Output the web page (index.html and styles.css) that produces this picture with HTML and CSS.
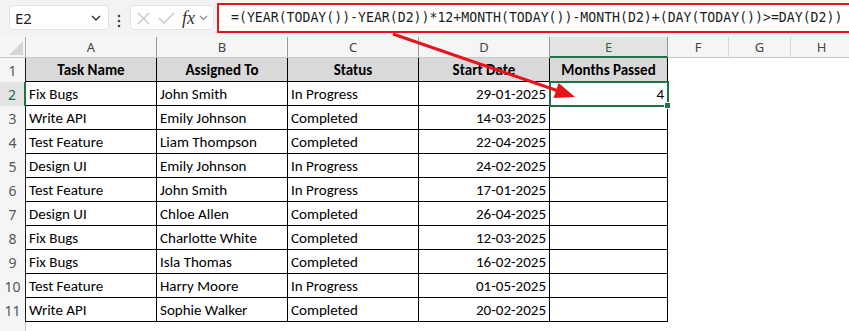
FILE: index.html
```html
<!DOCTYPE html>
<html>
<head>
<meta charset="utf-8">
<link rel="stylesheet" href="styles.css">
</head>
<body>
<div class="app">
  <div class="toolbar">
    <div class="namebox">
      <span class="nb-text">E2</span>
      <svg class="nb-chev" width="10" height="6" viewBox="0 0 10 6"><polyline points="1,1 5,5 9,1" fill="none" stroke="#333" stroke-width="1.4"/></svg>
    </div>
    <svg class="dots" width="4" height="14" viewBox="0 0 4 14"><circle cx="2" cy="2" r="1.3" fill="#444"/><circle cx="2" cy="7" r="1.3" fill="#444"/><circle cx="2" cy="12" r="1.3" fill="#444"/></svg>
    <div class="fxbox">
      <svg class="ic-x" width="13" height="13" viewBox="0 0 13 13"><path d="M1 1L12 12M12 1L1 12" stroke="#c4c4c4" stroke-width="1.3" fill="none"/></svg>
      <svg class="ic-ok" width="17" height="12" viewBox="0 0 17 12"><path d="M1 6L6 11L16 1" stroke="#c4c4c4" stroke-width="1.3" fill="none"/></svg>
      <span class="fx">fx</span>
      <svg class="fx-chev" width="9" height="6" viewBox="0 0 9 6"><polyline points="1,1 4.5,4.5 8,1" fill="none" stroke="#888" stroke-width="1.2"/></svg>
    </div>
    <div class="formula">=(YEAR(TODAY())-YEAR(D2))*12+MONTH(TODAY())-MONTH(D2)+(DAY(TODAY())&gt;=DAY(D2))</div>
  </div>

  <div class="grid">
    <div class="corner"><svg width="14" height="14" viewBox="0 0 14 14"><polygon points="14,0 14,14 0,14" fill="#d6d6d6"/></svg></div>
    <div class="ch dk">A</div><div class="ch dk">B</div><div class="ch dk">C</div><div class="ch dk">D</div><div class="ch dk sel">E</div><div class="ch">F</div><div class="ch">G</div><div class="ch">H</div>

    <div class="rh">1</div>
    <div class="c hd">Task Name</div><div class="c hd">Assigned To</div><div class="c hd">Status</div><div class="c hd">Start Date</div><div class="c hd">Months Passed</div><div class="x"></div><div class="x"></div><div class="x"></div>

    <div class="rh rsel">2</div>
    <div class="c">Fix Bugs</div><div class="c">John Smith</div><div class="c">In Progress</div><div class="c r">29-01-2025</div><div class="c r active">4<span class="handle"></span></div><div class="x"></div><div class="x"></div><div class="x"></div>

    <div class="rh">3</div>
    <div class="c">Write API</div><div class="c">Emily Johnson</div><div class="c">Completed</div><div class="c r">14-03-2025</div><div class="c"></div><div class="x"></div><div class="x"></div><div class="x"></div>

    <div class="rh">4</div>
    <div class="c">Test Feature</div><div class="c">Liam Thompson</div><div class="c">Completed</div><div class="c r">22-04-2025</div><div class="c"></div><div class="x"></div><div class="x"></div><div class="x"></div>

    <div class="rh">5</div>
    <div class="c">Design UI</div><div class="c">Emily Johnson</div><div class="c">In Progress</div><div class="c r">24-02-2025</div><div class="c"></div><div class="x"></div><div class="x"></div><div class="x"></div>

    <div class="rh">6</div>
    <div class="c">Test Feature</div><div class="c">John Smith</div><div class="c">In Progress</div><div class="c r">17-01-2025</div><div class="c"></div><div class="x"></div><div class="x"></div><div class="x"></div>

    <div class="rh">7</div>
    <div class="c">Design UI</div><div class="c">Chloe Allen</div><div class="c">Completed</div><div class="c r">26-04-2025</div><div class="c"></div><div class="x"></div><div class="x"></div><div class="x"></div>

    <div class="rh">8</div>
    <div class="c">Fix Bugs</div><div class="c">Charlotte White</div><div class="c">Completed</div><div class="c r">12-03-2025</div><div class="c"></div><div class="x"></div><div class="x"></div><div class="x"></div>

    <div class="rh">9</div>
    <div class="c">Fix Bugs</div><div class="c">Isla Thomas</div><div class="c">Completed</div><div class="c r">16-02-2025</div><div class="c"></div><div class="x"></div><div class="x"></div><div class="x"></div>

    <div class="rh">10</div>
    <div class="c">Test Feature</div><div class="c">Harry Moore</div><div class="c">In Progress</div><div class="c r">01-05-2025</div><div class="c"></div><div class="x"></div><div class="x"></div><div class="x"></div>

    <div class="rh">11</div>
    <div class="c">Write API</div><div class="c">Sophie Walker</div><div class="c">Completed</div><div class="c r">20-02-2025</div><div class="c"></div><div class="x"></div><div class="x"></div><div class="x"></div>

    <div class="rh blank"></div>
  </div>

  <svg class="arrow" width="849" height="331" viewBox="0 0 849 331">
    <line x1="393" y1="34" x2="557" y2="90.5" stroke="#e8141b" stroke-width="3"/>
    <polygon points="575,97 558.7,82.9 553.5,98.1" fill="#e8141b"/>
  </svg>
</div>
</body>
</html>
```

FILE: styles.css
```css
html, body {
  margin: 0;
  padding: 0;
  background: #ffffff;
}

.app {
  position: relative;
  width: 849px;
  height: 331px;
  overflow: hidden;
  background: #ffffff;
}

/* ---------- toolbar ---------- */
.toolbar {
  height: 37px;
  box-sizing: border-box;
  background: #f3f3f3;
  display: flex;
  align-items: flex-start;
  padding: 3px 0 0 9px;
  font-family: "Noto Sans", "Open Sans", sans-serif;
}

.namebox {
  margin-top: 2px;
  width: 100px;
  height: 25px;
  box-sizing: border-box;
  background: #fff;
  border: 1px solid #e3e3e3;
  border-radius: 4px;
  display: flex;
  align-items: center;
  justify-content: space-between;
  padding: 0 7px 0 5px;
  font-size: 15px;
  color: #222;
}

.nb-text {
  line-height: 20px;
}

.dots {
  margin: 11px 0 0 8px;
}

.fxbox {
  margin: 2px 0 0 9px;
  width: 84px;
  height: 25px;
  box-sizing: border-box;
  background: #fff;
  border: 1px solid #e3e3e3;
  border-radius: 4px;
  display: flex;
  align-items: center;
  padding: 0 0 0 6px;
}

.ic-x { margin-top: 1px; }
.ic-ok { margin: 1px 0 0 8px; }

.fx {
  margin-left: 7px;
  font-family: "Liberation Serif", "DejaVu Serif", serif;
  font-style: italic;
  font-size: 18px;
  line-height: 20px;
  color: #333;
}

.fx-chev { margin: 1px 0 0 4px; }

.formula {
  margin-left: 3px;
  margin-top: 0;
  flex: 1;
  height: 30px;
  box-sizing: border-box;
  border: 2px solid #e8141b;
  border-right: none;
  background: #fff;
  padding-left: 12px;
  font-family: "DejaVu Sans Mono", "Liberation Mono", monospace;
  font-size: 13.2px;
  line-height: 25px;
  color: #1e1e1e;
  white-space: nowrap;
  overflow: hidden;
}

/* ---------- grid ---------- */
.grid {
  display: grid;
  grid-template-columns: 26px 131px 131px 131px 131px 118px 61px 62px 62px;
  grid-template-rows: 21px repeat(11, 24px) 24px;
}

.grid > div {
  box-sizing: border-box;
}

.corner {
  background: #f5f5f5;
  border-right: 1px solid #a8a8a8;
  border-bottom: 1px solid #c8c8c8;
  display: flex;
  align-items: flex-end;
  justify-content: flex-end;
  padding: 0 2px 2px 0;
}

.ch {
  background: #f5f5f5;
  border-right: 1px solid #d6d6d6;
  border-bottom: 1px solid #c8c8c8;
  text-align: center;
  font-family: "Noto Sans", "Open Sans", sans-serif;
  font-size: 13px;
  line-height: 20px;
  color: #444;
}

.ch.dk {
  border-right-color: #9a9a9a;
}

.ch.sel {
  background: #e3e3e3;
  color: #1e6b41;
  border-bottom: 2px solid #217346;
}

.rh {
  background: #f5f5f5;
  border-right: 1px solid #1a1a1a;
  text-align: center;
  font-family: "Noto Sans", "Open Sans", sans-serif;
  font-size: 14px;
  line-height: 25px;
  color: #555;
}

.rh.rsel {
  background: #e3e3e3;
  color: #1e6b41;
  border-right: 2px solid #217346;
}

.rh.blank {
  border-right-color: #c8c8c8;
}

.c {
  position: relative;
  border-right: 1px solid #000;
  border-bottom: 1px solid #000;
  padding: 0 3px;
  font-family: Carlito, Lato, "Liberation Sans", sans-serif;
  font-size: 15px;
  line-height: 24px;
  color: #000;
  white-space: nowrap;
  overflow: visible;
}

.c.hd {
  background: #d9d9d9;
  font-weight: bold;
  text-align: center;
}

.c.r {
  text-align: right;
}

.c.active {
  outline: 2px solid #217346;
  outline-offset: -1px;
  z-index: 2;
}

.handle {
  position: absolute;
  right: -4px;
  bottom: -4px;
  width: 5px;
  height: 5px;
  background: #217346;
  border: 1px solid #fff;
}

.x {
  background: #fff;
}

/* ---------- annotation arrow ---------- */
.arrow {
  position: absolute;
  left: 0;
  top: 0;
  pointer-events: none;
  z-index: 5;
}
```
